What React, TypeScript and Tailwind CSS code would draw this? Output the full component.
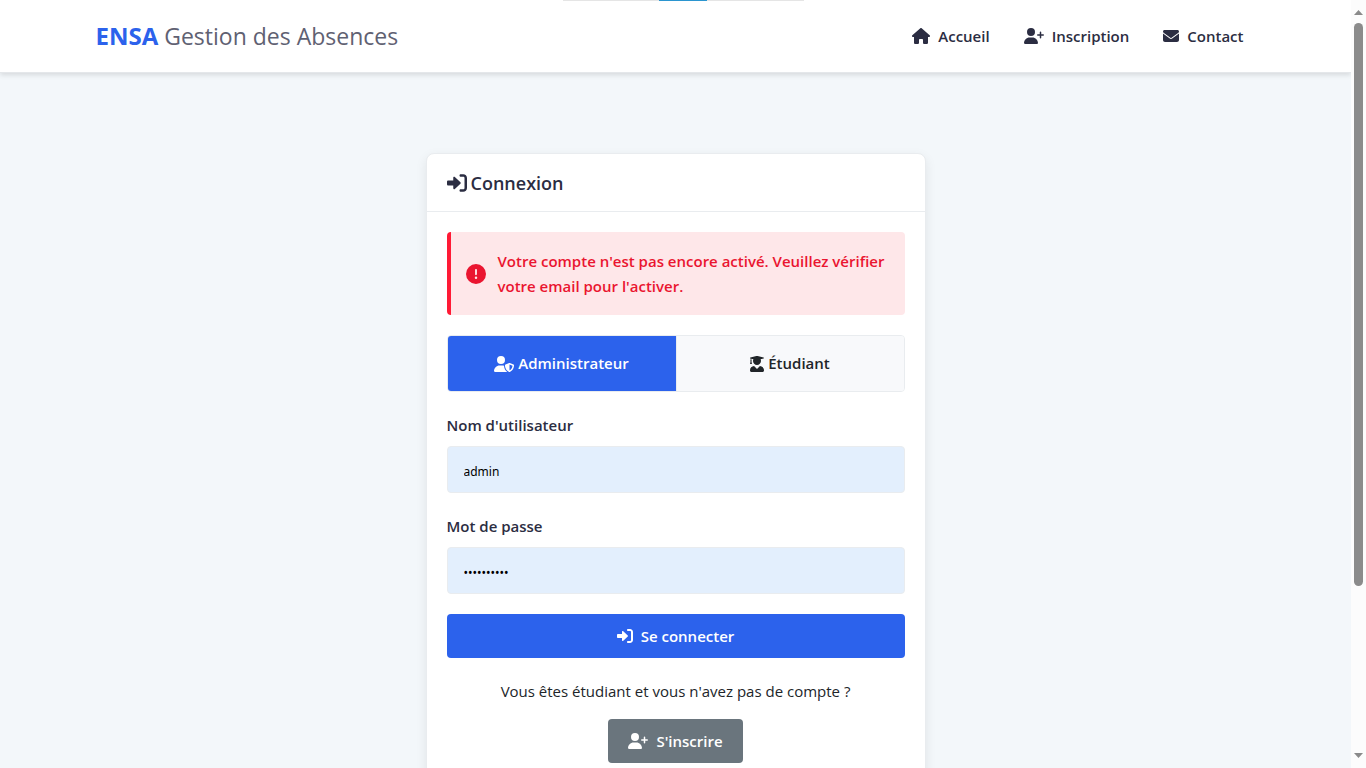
import type { ReactNode } from "react";
import { FaUserGraduate } from "react-icons/fa";
import { FaCircleExclamation, FaEnvelope, FaHouse, FaUserPlus, FaUserShield } from "react-icons/fa6";

function SignInIcon({ className }: { className: string }) {
  return (
    <svg viewBox="0 0 512 512" aria-hidden="true" fill="currentColor" className={className}>
      <path d="M344.7 238.5l-144.1-136C193.7 95.97 183.4 94.17 174.6 97.95C165.8 101.8 160.1 110.4 160.1 120V192H32.02C14.33 192 0 206.3 0 224v64c0 17.68 14.33 32 32.02 32h128.1v72c0 9.578 5.707 18.25 14.51 22.05c8.803 3.781 19.03 1.984 26-4.594l144.1-136C354.3 264.6 354.3 247.4 344.7 238.5zM416 32h-64c-17.67 0-32 14.33-32 32s14.33 32 32 32h64c17.67 0 32 14.33 32 32v256c0 17.67-14.33 32-32 32h-64c-17.67 0-32 14.33-32 32s14.33 32 32 32h64c53.02 0 96-42.98 96-96V128C512 74.98 469 32 416 32z" />
    </svg>
  );
}

function NavLink({ icon, children }: { icon: ReactNode; children: ReactNode }) {
  return (
    <a href="#" className="flex items-center gap-2 px-3 py-2 text-[15px] font-semibold text-[#2b2d42]">
      {icon}
      {children}
    </a>
  );
}

function Field({ id, label, type, value }: { id: string; label: string; type: string; value: string }) {
  return (
    <div className="mb-5">
      <label htmlFor={id} className="mb-2 block text-[15px] leading-[26px] font-semibold text-[#2b2d42]">
        {label}
      </label>
      <input
        id={id}
        type={type}
        defaultValue={value}
        className="block h-[47px] w-full rounded border border-[#e9ecef] bg-[#e3effd] px-4 pt-[3px] font-['Noto_Sans',sans-serif] text-[12px] text-black outline-none"
      />
    </div>
  );
}

function Header() {
  return (
    <header className="border-b border-[#e4e7ea] bg-white shadow-[0_2px_5px_rgba(0,0,0,0.12)]">
      <div className="mx-auto flex h-[72px] max-w-[1200px] items-center justify-between px-5">
        <a href="#" className="flex items-baseline gap-[6px] text-[#5f6172]">
          <span className="text-2xl font-bold text-[#2c62ec]">ENSA</span>
          <span className="text-[23px]">Gestion des Absences</span>
        </a>
        <nav className="flex gap-[10px]">
          <NavLink icon={<FaHouse className="h-4 w-[18px]" />}>Accueil</NavLink>
          <NavLink icon={<FaUserPlus className="h-4 w-5" />}>Inscription</NavLink>
          <NavLink icon={<FaEnvelope className="size-4" />}>Contact</NavLink>
        </nav>
      </div>
    </header>
  );
}

function LoginCard() {
  return (
    <section className="mx-auto w-full max-w-[500px] rounded-lg border border-[#e9ecef] bg-white shadow-[0_4px_12px_rgba(0,0,0,0.08)]">
      <h1 className="flex h-[58px] items-center gap-1 border-b border-[#e9ecef] px-5 text-lg font-semibold text-[#2b2d42]">
        <SignInIcon className="size-5" />
        Connexion
      </h1>
      <div className="p-5">
        <div
          role="alert"
          className="mb-5 flex min-h-[83px] items-center gap-3 rounded border-l-4 border-[#ff1a35] bg-[#fee7e9] px-[15px] py-4 text-[15px] leading-[25px] font-semibold text-[#ea1530]"
        >
          <FaCircleExclamation className="size-5 shrink-0" />
          <p>Votre compte n'est pas encore activé. Veuillez vérifier votre email pour l'activer.</p>
        </div>
        <div className="mb-5 grid h-[57px] grid-cols-2 overflow-hidden rounded border border-[#e9ecef] text-[15px] font-semibold">
          <button type="button" className="flex items-center justify-center gap-1 bg-[#2c62ec] text-white">
            <FaUserShield className="h-4 w-5" />
            Administrateur
          </button>
          <button
            type="button"
            className="flex items-center justify-center gap-1 border-l border-[#e9ecef] bg-[#f8f9fb] text-[#212529]"
          >
            <FaUserGraduate className="h-4 w-[14px]" />
            Étudiant
          </button>
        </div>
        <form onSubmit={(e) => e.preventDefault()}>
          <Field id="username" label="Nom d'utilisateur" type="text" value="admin" />
          <Field id="password" label="Mot de passe" type="password" value="motdepasse" />
          <button
            type="submit"
            className="flex h-11 w-full items-center justify-center gap-2 rounded bg-[#2c62ec] text-[15px] font-semibold text-white"
          >
            <SignInIcon className="size-4" />
            Se connecter
          </button>
        </form>
        <div className="mt-5 flex flex-col items-center gap-[15px]">
          <p className="text-[15px] leading-[26px] text-[#212529]">Vous êtes étudiant et vous n'avez pas de compte ?</p>
          <a
            href="#"
            className="flex h-11 items-center gap-2 rounded bg-[#6a757d] px-5 text-[15px] font-semibold text-white"
          >
            <FaUserPlus className="h-4 w-5" />
            S'inscrire
          </a>
        </div>
      </div>
    </section>
  );
}

function ScrollTrack() {
  return (
    <div aria-hidden="true" className="flex w-[15px] shrink-0 flex-col items-center justify-between bg-[#fcfcfc] py-[10px]">
      <svg viewBox="0 0 9 5" className="h-[5px] w-[9px] fill-[#8a8a8a]">
        <path d="M4.5 0 9 5H0z" />
      </svg>
      <div className="my-2 flex w-[9px] flex-1 flex-col">
        <div className="h-[78%] rounded-full bg-[#8b8b8b]" />
      </div>
      <svg viewBox="0 0 9 5" className="h-[5px] w-[9px] fill-[#8a8a8a]">
        <path d="M4.5 5 9 0H0z" />
      </svg>
    </div>
  );
}

export default function App() {
  return (
    <div className="relative flex h-screen bg-[#f3f7fa] font-['Open_Sans','Noto_Sans',sans-serif]">
      <div className="absolute inset-x-0 top-0 z-10 mx-auto flex h-px w-[241px] justify-center bg-[#e5e5e5]">
        <span className="w-12 bg-[#2b95cf]" />
      </div>
      <div className="min-w-0 flex-1 overflow-y-auto [scrollbar-width:none]">
        <Header />
        <main className="px-5 py-20">
          <LoginCard />
        </main>
      </div>
      <ScrollTrack />
    </div>
  );
}
